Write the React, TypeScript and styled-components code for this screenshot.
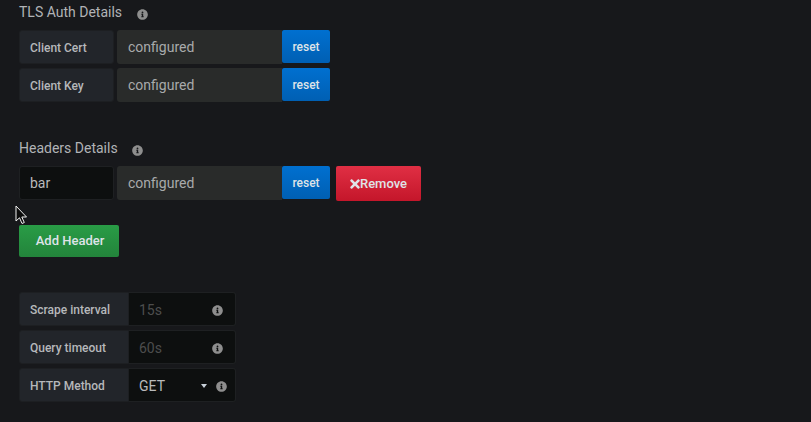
import styled, { createGlobalStyle } from "styled-components";
import { FaInfoCircle, FaTimes } from "react-icons/fa";

const GlobalStyle = createGlobalStyle`
  html, body {
    margin: 0;
    height: 100%;
    overflow: hidden;
    background: #17181b;
    font-family: Roboto, "Liberation Sans", sans-serif;
  }
`;

const Page = styled.div`
  position: relative;
  height: 422px;
  padding-left: 19px;
  box-sizing: border-box;
`;

const Heading = styled.h6<{ $top: number; $gap: number }>`
  display: flex;
  align-items: center;
  gap: ${(p) => p.$gap}px;
  height: 24px;
  margin: ${(p) => p.$top}px 0 6px;
  font-size: 14px;
  font-weight: 400;
  line-height: 24px;
  color: #b1b3b6;
`;

const Help = styled(FaInfoCircle)`
  width: 11px;
  height: 11px;
  color: #8e8e8e;
  flex: none;
  position: relative;
  top: 1px;
`;

const HeadingHelp = styled(Help)`
  top: 2px;
`;

const Row = styled.div<{ $gap?: number }>`
  display: flex;
  height: 34px;
  margin-bottom: ${(p) => p.$gap ?? 4}px;
`;

const Label = styled.div<{ $width: number; $joined?: boolean }>`
  box-sizing: border-box;
  width: ${(p) => p.$width}px;
  margin-right: ${(p) => (p.$joined ? 0 : 3)}px;
  padding-left: 10px;
  background: #22252a;
  border: 1px solid #1d1f22;
  border-radius: ${(p) => (p.$joined ? "3px 0 0 3px" : "3px")};
  font-size: 12px;
  font-weight: 500;
  line-height: 34px;
  color: #b6b8bb;
`;

const Configured = styled.div`
  box-sizing: border-box;
  width: 165px;
  padding-left: 11px;
  background: #292b2a;
  border-radius: 3px 0 0 3px;
  font-size: 14px;
  line-height: 35px;
  color: #a8aaab;
`;

const KeyInput = styled.div`
  box-sizing: border-box;
  width: 95px;
  margin-right: 3px;
  padding-left: 10px;
  background: #0d0f0f;
  border: 1px solid #1e2022;
  border-radius: 3px;
  font-size: 14px;
  line-height: 33px;
  color: #b9babb;
`;

const Button = styled.div`
  display: flex;
  align-items: center;
  justify-content: center;
  box-sizing: border-box;
  border-radius: 2px;
  color: #dfe3e8;
  font-weight: 500;
`;

const ResetButton = styled(Button)`
  width: 48px;
  height: 33px;
  background: linear-gradient(to bottom, #0070d0, #005fb3);
  font-size: 12px;
`;

const RemoveButton = styled(Button)`
  width: 85px;
  height: 35px;
  margin-left: 6px;
  background: linear-gradient(to bottom, #e02f44, #c4162a);
  font-size: 13px;
`;

const CloseIcon = styled(FaTimes)`
  width: 10px;
  height: 14px;
`;

const AddButton = styled(Button)`
  width: 100px;
  height: 32px;
  margin: 25px 0 35px;
  padding: 0 0 2px 2px;
  background: linear-gradient(to bottom, #299c46, #23843b);
  font-size: 13px;
`;

const Field = styled.div<{ $select?: boolean }>`
  display: flex;
  align-items: center;
  box-sizing: border-box;
  width: 107px;
  padding: 1px ${(p) => (p.$select ? 8 : 12)}px 0 10px;
  background: #0d0f0f;
  border: 1px solid #1e2022;
  border-left: none;
  border-radius: 0 3px 3px 0;
  font-size: 14px;
`;

const FieldText = styled.span<{ $placeholder?: boolean }>`
  flex: 1;
  padding-top: 1px;
  color: ${(p) => (p.$placeholder ? "#4c4d4d" : "#b9babb")};
`;

const Caret = styled.span`
  width: 0;
  height: 0;
  margin-right: 9px;
  border-left: 3.5px solid transparent;
  border-right: 3.5px solid transparent;
  border-top: 4px solid #c7d0d9;
`;

const Cursor = styled.svg`
  position: absolute;
  left: 15px;
  top: 205px;
`;

function SecretRow({ label }: { label: string }) {
  return (
    <Row>
      <Label $width={95}>{label}</Label>
      <Configured>configured</Configured>
      <ResetButton>reset</ResetButton>
    </Row>
  );
}

function SettingRow({ label, value }: { label: string; value: string }) {
  return (
    <Row>
      <Label $width={110} $joined>
        {label}
      </Label>
      <Field>
        <FieldText $placeholder>{value}</FieldText>
        <Help />
      </Field>
    </Row>
  );
}

export default function App() {
  return (
    <Page>
      <GlobalStyle />
      <Heading $top={0} $gap={15}>
        TLS Auth Details <HeadingHelp />
      </Heading>
      <SecretRow label="Client Cert" />
      <SecretRow label="Client Key" />

      <Heading $top={34} $gap={14}>
        Headers Details <HeadingHelp />
      </Heading>
      <Row $gap={0}>
        <KeyInput>bar</KeyInput>
        <Configured>configured</Configured>
        <ResetButton>reset</ResetButton>
        <RemoveButton>
          <CloseIcon />
          Remove
        </RemoveButton>
      </Row>
      <AddButton>Add Header</AddButton>

      <SettingRow label="Scrape interval" value="15s" />
      <SettingRow label="Query timeout" value="60s" />
      <Row>
        <Label $width={110} $joined>
          HTTP Method
        </Label>
        <Field $select>
          <FieldText>GET</FieldText>
          <Caret />
          <Help />
        </Field>
      </Row>

      <Cursor width="13" height="20" viewBox="0 0 13 20">
        <path
          d="M1 1 L1 16 L4.5 12.8 L7 18.5 L9.3 17.5 L6.8 12 L11.5 12 Z"
          fill="#0b0b0b"
          stroke="#f2f2f2"
          strokeWidth="1"
        />
      </Cursor>
    </Page>
  );
}
